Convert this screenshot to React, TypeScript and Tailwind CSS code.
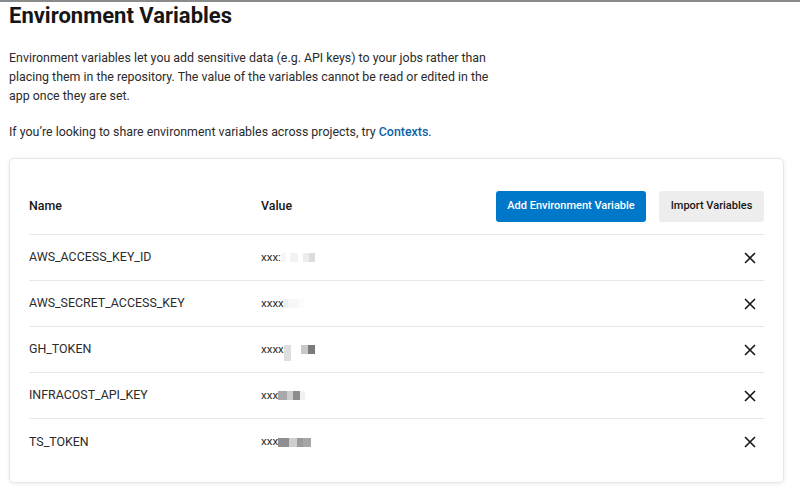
import React from 'react';

type Row = {
  name: string;
  prefix: string;
  blocks: { w: number; c: string; h?: number; mt?: number }[];
};

const rows: Row[] = [
  {
    name: 'AWS_ACCESS_KEY_ID',
    prefix: 'xxx:',
    blocks: [
      { w: 5, c: '#f6f6f6' },
      { w: 4, c: '#ffffff' },
      { w: 8, c: '#f2f2f2' },
      { w: 5, c: '#ffffff' },
      { w: 6, c: '#ececec' },
      { w: 6, c: '#dcdcdc' },
    ],
  },
  {
    name: 'AWS_SECRET_ACCESS_KEY',
    prefix: 'xxxx',
    blocks: [
      { w: 4, c: '#eeeeee' },
      { w: 10, c: '#f7f7f7' },
      { w: 6, c: '#fbfbfb' },
    ],
  },
  {
    name: 'GH_TOKEN',
    prefix: 'xxxx',
    blocks: [
      { w: 7, c: '#dedede', h: 16, mt: 6 },
      { w: 10, c: '#ffffff' },
      { w: 7, c: '#c8c8c8' },
      { w: 7, c: '#7a7a7a' },
    ],
  },
  {
    name: 'INFRACOST_API_KEY',
    prefix: 'xxx',
    blocks: [
      { w: 9, c: '#a8a8a8' },
      { w: 6, c: '#cdcdcd' },
      { w: 7, c: '#8c8c8c' },
      { w: 5, c: '#f1f1f1' },
    ],
  },
  {
    name: 'TS_TOKEN',
    prefix: 'xxx',
    blocks: [
      { w: 11, c: '#8e8e8e' },
      { w: 8, c: '#cfcfcf' },
      { w: 6, c: '#9a9a9a' },
      { w: 8, c: '#a6a6a6' },
    ],
  },
];

const CloseIcon = () => (
  <svg width="12" height="12" viewBox="0 0 12 12" fill="none">
    <path d="M1 1L11 11M11 1L1 11" stroke="#161616" strokeWidth="1.6" />
  </svg>
);

export default function App() {
  return (
    <div
      className="w-[800px] h-[494px] bg-white border-t-2 border-[#8a8a8a] px-[9px] text-[#161616] overflow-hidden"
      style={{ fontFamily: 'Roboto, "Liberation Sans", sans-serif' }}
    >
      <h1 className="text-[22px] font-bold leading-[26px] mt-[1px]">Environment Variables</h1>

      <p className="mt-[19px] w-[490px] text-[12.4px] leading-[19px] text-[#2b2b2b]">
        Environment variables let you add sensitive data (e.g. API keys) to your jobs rather than
        placing them in the repository. The value of the variables cannot be read or edited in the
        app once they are set.
      </p>

      <p className="mt-[17px] text-[12.4px] leading-[19px] text-[#2b2b2b]">
        If you’re looking to share environment variables across projects, try{' '}
        <span className="text-[#0a62a8] font-medium">Contexts</span>.
      </p>

      <div className="mt-[17px] w-[775px] rounded-[5px] border border-[#e6e6e6] shadow-[0_1px_4px_rgba(0,0,0,0.08)] px-[19px] pt-[32px] pb-[17px]">
        <div className="flex items-center border-b border-[#e7e7e7] pb-[12px]">
          <div className="w-[232px] text-[12.4px] font-medium">Name</div>
          <div className="flex-1 text-[12.4px] font-medium">Value</div>
          <button className="h-[31px] w-[150px] rounded-[3px] bg-[#0078ca] text-white text-[11px] font-medium">
            Add Environment Variable
          </button>
          <button className="ml-[13px] h-[31px] w-[105px] rounded-[3px] bg-[#ededed] text-[#161616] text-[11px] font-medium">
            Import Variables
          </button>
        </div>

        {rows.map((r, i) => (
          <div
            key={r.name}
            className={`flex items-center h-[46px] ${i < rows.length - 1 ? 'border-b border-[#e7e7e7]' : ''}`}
          >
            <div className="w-[232px] text-[12.4px] text-[#2b2b2b]">{r.name}</div>
            <div className="flex-1 flex items-center text-[11.5px] text-[#2b2b2b]">
              <span>{r.prefix}</span>
              {r.blocks.map((b, j) => (
                <span
                  key={j}
                  className="inline-block"
                  style={{
                    width: b.w,
                    backgroundColor: b.c,
                    height: b.h ?? 9,
                    marginTop: b.mt ?? 0,
                  }}
                />
              ))}
            </div>
            <div className="w-[20px] flex justify-end pr-[8px]">
              <CloseIcon />
            </div>
          </div>
        ))}
      </div>
    </div>
  );
}
